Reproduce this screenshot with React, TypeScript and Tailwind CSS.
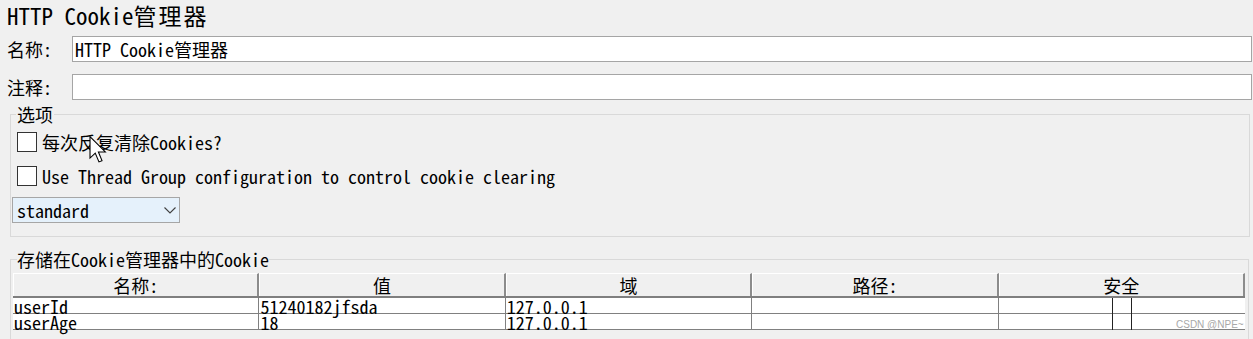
import React from 'react';

const columns = ['名称:', '值', '域', '路径:', '安全'];

const cookies = [
  { name: 'userId', value: '51240182jfsda', domain: '127.0.0.1', path: '' },
  { name: 'userAge', value: '18', domain: '127.0.0.1', path: '' },
];

function Checkbox({ label }: { label: string }) {
  return (
    <div className="flex items-center h-[20px] ml-[6px]">
      <div className="w-[20px] h-[20px] border border-[#333333] bg-white" />
      <span className="ml-[5px] leading-[20px]">{label}</span>
    </div>
  );
}

function Cursor() {
  return (
    <svg
      className="absolute left-[89px] top-[136px]"
      width="18"
      height="27"
      viewBox="0 0 12.6 19.6"
    >
      <path
        d="M0.5 0.5 L0.5 16 L4.3 12.4 L7 18.8 L9.2 17.9 L6.6 11.6 L11.6 11.6 Z"
        fill="#ffffff"
        stroke="#000000"
        strokeWidth="0.8"
        strokeLinejoin="miter"
      />
    </svg>
  );
}

export default function App() {
  return (
    <div className="relative h-[339px] w-[1253px] overflow-hidden bg-[#f0f0f0] text-black text-[18px] font-['Noto_Sans_Mono_CJK_SC','Noto_Sans_CJK_SC',monospace]">
      {/* Title */}
      <div className="h-[30px] pl-[7px] flex items-center text-[23px] leading-[30px]">
        HTTP Cookie<span className="tracking-[2px]">管理器</span>
      </div>

      {/* Name / comment */}
      <div className="mt-[6px] flex items-center h-[26px]">
        <span className="w-[72px] pl-[7px] shrink-0">名称:</span>
        <input
          readOnly
          defaultValue="HTTP Cookie管理器"
          className="flex-1 h-[26px] mr-[1px] border border-[#a5a5a5] bg-white pl-[2px] outline-none"
        />
      </div>
      <div className="mt-[12px] flex items-center h-[26px]">
        <span className="w-[72px] pl-[7px] shrink-0">注释:</span>
        <input
          readOnly
          defaultValue=""
          className="flex-1 h-[26px] mr-[1px] border border-[#a5a5a5] bg-white pl-[2px] outline-none"
        />
      </div>

      {/* Options */}
      <fieldset className="mt-[4px] ml-[10px] w-[1240px] border border-[#d9d9d9] pb-[13px]">
        <legend className="ml-[5px] px-[1px] leading-[20px]">选项</legend>
        <div className="mt-[8px]">
          <Checkbox label="每次反复清除Cookies?" />
        </div>
        <div className="mt-[14px]">
          <Checkbox label="Use Thread Group configuration to control cookie clearing" />
        </div>
        <div className="mt-[11px] ml-[1px] w-[168px] h-[26px] border border-[#a6a6a6] bg-[#e5f1fb] flex items-center justify-between pl-[4px] pr-[3px]">
          <span className="leading-[24px]">standard</span>
          <svg width="12" height="7" viewBox="0 0 12 7">
            <path d="M0.5 0.5 L6 6 L11.5 0.5" fill="none" stroke="#404040" strokeWidth="1.1" />
          </svg>
        </div>
      </fieldset>

      {/* Stored cookies */}
      <fieldset className="mt-[12px] ml-[10px] w-[1239px] border border-[#d9d9d9] pb-[20px]">
        <legend className="ml-[6px] leading-[20px]">存储在Cookie管理器中的Cookie</legend>
        <div className="mt-[4px] ml-[2px] w-[1232px]">
          <div className="grid grid-cols-5 h-[25px] border-b-2 border-[#7f7f7f]">
            {columns.map((c) => (
              <div
                key={c}
                className="flex items-center justify-center bg-[#f0f0f0] border-t border-l border-white border-r-2 border-r-[#8c8c8c] leading-[22px]"
              >
                {c}
              </div>
            ))}
          </div>
          {cookies.map((row) => (
            <div key={row.name} className="grid grid-cols-5 h-[16px] bg-white border-b border-[#808080]">
              <div className="border-r border-[#808080] pl-[1px] leading-[16px] overflow-visible whitespace-nowrap">
                {row.name}
              </div>
              <div className="border-r border-[#808080] pl-[1px] leading-[16px] whitespace-nowrap">
                {row.value}
              </div>
              <div className="border-r border-[#808080] pl-[1px] leading-[16px] whitespace-nowrap">
                {row.domain}
              </div>
              <div className="border-r border-[#808080] leading-[16px]">{row.path}</div>
              <div className="flex justify-center">
                <div className="w-[20px] h-full border-l border-r border-[#222222]" />
              </div>
            </div>
          ))}
        </div>
      </fieldset>

      <span className="absolute left-[1176px] top-[319px] text-[10px] leading-[12px] text-[#a8a8a8] font-['Liberation_Sans',sans-serif]">
        CSDN @NPE~
      </span>

      <Cursor />
    </div>
  );
}
